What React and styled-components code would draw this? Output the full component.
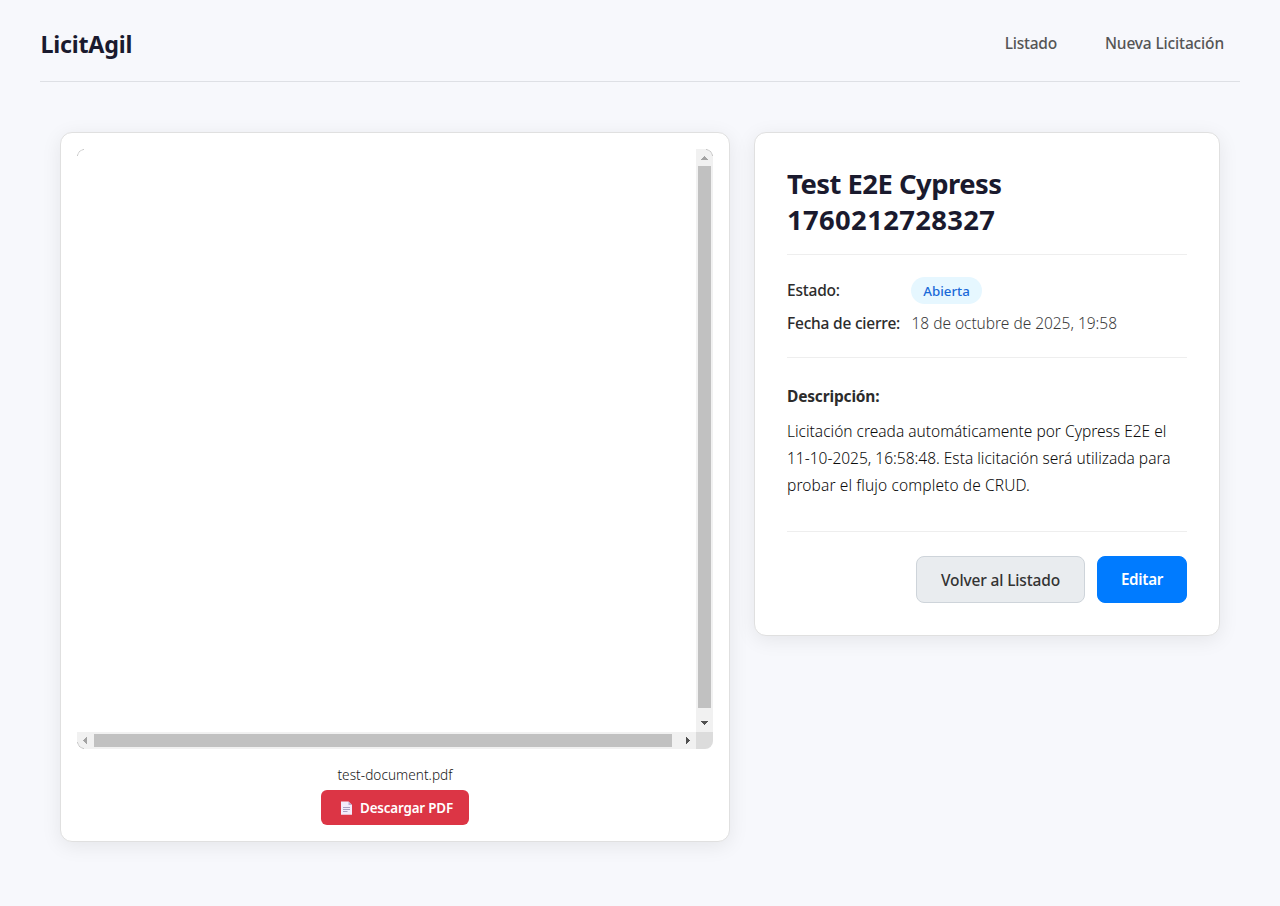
import React from "react";
import styled, { createGlobalStyle } from "styled-components";

const GlobalStyle = createGlobalStyle`
  *, *::before, *::after { box-sizing: border-box; }
  body {
    margin: 0;
    min-height: 100vh;
    background: #f7f8fc;
    color: #2c2c2c;
    font-family: "Noto Sans", "Open Sans", sans-serif;
    font-size: 15.5px;
    font-weight: 300;
  }
  h1, h2, p, dl, dd { margin: 0; }
`;

const Page = styled.div`
  width: 1200px;
  margin: 0 auto;
`;

const Header = styled.header`
  display: flex;
  justify-content: space-between;
  align-items: center;
  height: 82px;
  padding-top: 6px;
  border-bottom: 1px solid #dee0e5;
`;

const Brand = styled.div`
  padding-left: 0.5px;
  color: #1a1a2e;
  font-size: 23.3px;
  font-weight: 700;
  letter-spacing: -0.25px;
`;

const Nav = styled.nav`
  display: flex;
  gap: 16px;
  padding-bottom: 2px;
`;

const NavLink = styled.a`
  padding: 0 16px;
  color: #555;
  font-weight: 500;
  line-height: 24px;
  letter-spacing: ${(p) => p.$track}px;
`;

const Main = styled.main`
  display: grid;
  grid-template-columns: 670px 466px;
  gap: 24px;
  align-items: start;
  padding: 50px 20px 0;
`;

const Card = styled.section`
  padding: ${(p) => p.$pad};
  background: #fff;
  border: 1px solid #e0e0e0;
  border-radius: 12px;
  box-shadow: 0 4px 20px rgba(0, 0, 0, 0.08);
`;

const Viewer = styled.div`
  position: relative;
  display: grid;
  grid-template: 583px 17px / 619px 17px;
  overflow: hidden;
  border-radius: 8px;
`;

const VerticalBar = styled.div`
  display: flex;
  flex-direction: column;
  align-items: center;
  background: #f1f1f1;
`;

const HorizontalBar = styled.div`
  display: flex;
  align-items: center;
  background: #f1f1f1;
`;

const Thumb = styled.div`
  width: ${(p) => p.$w}px;
  height: ${(p) => p.$h}px;
  background: #c1c1c1;
`;

const Spacer = styled.div`
  flex: 1;
`;

const Corner = styled.div`
  background: #dcdcdc;
`;

const ArrowSvg = styled.svg`
  display: block;
  flex: none;
`;

const CornerEdge = styled.svg`
  position: absolute;
  inset: 0;
`;

const FileFooter = styled.div`
  display: flex;
  flex-direction: column;
  align-items: center;
  padding-top: 16px;
`;

const FileName = styled.p`
  font-size: 13.6px;
  line-height: 20px;
  letter-spacing: 0.04px;
  color: #161616;
`;

const Download = styled.a`
  display: flex;
  align-items: center;
  width: 148px;
  height: 35px;
  margin-top: 5px;
  padding-left: 18px;
  gap: 7px;
  border-radius: 6px;
  background: #dc3545;
  color: #fff;
  font-size: 13.4px;
  font-weight: 600;
  letter-spacing: -0.17px;
  white-space: nowrap;
`;

const Title = styled.h1`
  height: 90px;
  border-bottom: 1px solid #eee;
  color: #1a1a2e;
  font-size: 27.4px;
  font-weight: 700;
  line-height: 36px;
  padding-top: 1px;
`;

const TitleLine = styled.span`
  display: block;
  letter-spacing: ${(p) => p.$track}px;
`;

const Facts = styled.dl`
  display: grid;
  grid-template-columns: 124px 1fr;
  grid-template-rows: 27px 27px;
  row-gap: 6px;
  align-items: center;
  height: 103px;
  padding-top: 22px;
  align-content: start;
  border-bottom: 1px solid #eee;
`;

const Term = styled.dt`
  padding-bottom: 2px;
  color: #2c2c2c;
  font-weight: 500;
  white-space: nowrap;
  letter-spacing: ${(p) => p.$track}px;
`;

const Value = styled.dd`
  color: #3a3a3a;
`;

const DateText = styled.span`
  display: block;
  padding: 0 0 2px 0.5px;
  letter-spacing: -0.03px;
`;

const Badge = styled.span`
  display: flex;
  align-items: center;
  justify-content: center;
  width: 71px;
  height: 27px;
  border-radius: 14px;
  background: #e6f7ff;
  color: #1a69d8;
  font-size: 13.3px;
  font-weight: 500;
`;

const Description = styled.div`
  height: 174px;
  padding-top: 25px;
  border-bottom: 1px solid #eee;
`;

const Subtitle = styled.h2`
  margin-bottom: 9px;
  color: #2c2c2c;
  font-size: 15.5px;
  font-weight: 700;
  line-height: 26px;
  letter-spacing: -0.17px;
`;

const Line = styled.span`
  display: block;
  color: #0c0c0c;
  line-height: 27px;
  white-space: nowrap;
  letter-spacing: ${(p) => p.$track}px;
`;

const Actions = styled.div`
  display: flex;
  justify-content: flex-end;
  gap: 12px;
  padding-top: 24px;
`;

const Button = styled.button`
  width: ${(p) => (p.$primary ? 90 : 169)}px;
  height: 47px;
  padding: ${(p) => (p.$primary ? "0 0 1px" : "1px 0 0")};
  border: 1px solid ${(p) => (p.$primary ? "#007bff" : "#ced4da")};
  border-radius: 8px;
  background: ${(p) => (p.$primary ? "#007bff" : "#e9ecef")};
  color: ${(p) => (p.$primary ? "#fff" : "#333")};
  font-family: inherit;
  font-size: ${(p) => (p.$primary ? 15.2 : 15.5)}px;
  font-weight: ${(p) => (p.$primary ? 600 : 500)};
  letter-spacing: ${(p) => (p.$primary ? -0.3 : -0.15)}px;
  white-space: nowrap;
`;

const arrows = {
  up: "M5 11h7v-1h-1v-1h-1v-1h-1v-1h-1v1h-1v1h-1v1h-1z",
  down: "M5 6h7v1h-1v1h-1v1h-1v1h-1v-1h-1v-1h-1v-1h-1z",
  left: "M10 5v7h-1v-1h-1v-1h-1v-1h-1v-1h1v-1h1v-1h1v-1z",
  right: "M7 5v7h1v-1h1v-1h1v-1h1v-1h-1v-1h-1v-1h-1v-1z",
};

const Arrow = ({ dir, off }) => (
  <ArrowSvg width="17" height="17" shapeRendering="crispEdges">
    <path d={arrows[dir]} fill={off ? "#a3a3a3" : "#505050"} />
  </ArrowSvg>
);

const PageIcon = () => (
  <svg width="14" height="16" viewBox="0 0 14 16">
    <path d="M2 1.5h7.5l3.5 3.5v9.8H2z" fill="#f3ebfa" />
    <path d="M9.5 1.5l3.5 3.5H9.5z" fill="#bda9cf" />
    <path d="M4 7.5h7M4 9.5h7M4 11.5h4.5" stroke="#aaa0c2" strokeWidth="1" />
  </svg>
);

export default function App() {
  return (
    <>
      <GlobalStyle />
      <Page>
        <Header>
          <Brand>LicitAgil</Brand>
          <Nav>
            <NavLink $track={-0.25}>Listado</NavLink>
            <NavLink $track={-0.15}>Nueva Licitación</NavLink>
          </Nav>
        </Header>
        <Main>
          <Card $pad="16px">
            <Viewer>
              <div />
              <VerticalBar>
                <Arrow dir="up" off />
                <Thumb $w={13} $h={542} />
                <Spacer />
                <Arrow dir="down" />
              </VerticalBar>
              <HorizontalBar>
                <Arrow dir="left" off />
                <Thumb $w={578} $h={13} />
                <Spacer />
                <Arrow dir="right" />
              </HorizontalBar>
              <Corner />
              <CornerEdge width="636" height="600" fill="none" stroke="#a8a8a8" strokeWidth="0.8">
                <path d="M0.4 7A7 7 0 0 1 7 0.4M0.4 593A7 7 0 0 0 7 599.6M629 0.4A7 7 0 0 1 635.6 7" />
              </CornerEdge>
            </Viewer>
            <FileFooter>
              <FileName>test-document.pdf</FileName>
              <Download>
                <PageIcon />
                Descargar PDF
              </Download>
            </FileFooter>
          </Card>
          <Card $pad="32px">
            <Title>
              <TitleLine $track={-0.5}>Test E2E Cypress</TitleLine>
              <TitleLine $track={0.36}>1760212728327</TitleLine>
            </Title>
            <Facts>
              <Term $track={-0.2}>Estado:</Term>
              <Value>
                <Badge>Abierta</Badge>
              </Value>
              <Term $track={-0.21}>Fecha de cierre:</Term>
              <Value>
                <DateText>18 de octubre de 2025, 19:58</DateText>
              </Value>
            </Facts>
            <Description>
              <Subtitle>Descripción:</Subtitle>
              <p>
                <Line $track={0}>Licitación creada automáticamente por Cypress E2E el </Line>
                <Line $track={0}>11-10-2025, 16:58:48. Esta licitación será utilizada para </Line>
                <Line $track={0.12}>probar el flujo completo de CRUD.</Line>
              </p>
            </Description>
            <Actions>
              <Button>Volver al Listado</Button>
              <Button $primary>Editar</Button>
            </Actions>
          </Card>
        </Main>
      </Page>
    </>
  );
}
